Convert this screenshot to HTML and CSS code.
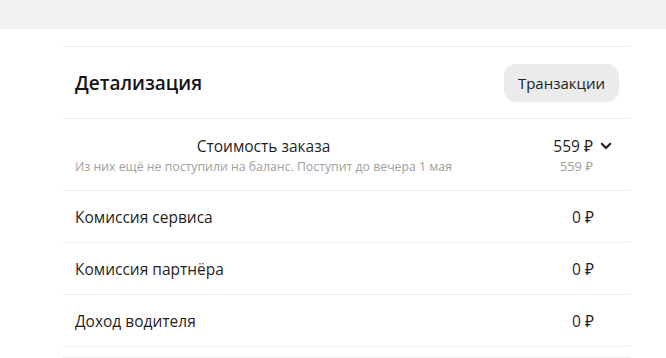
FILE: index.html
```html
<!DOCTYPE html>
<html lang="ru">
<head>
  <meta charset="UTF-8">
  <title>Детализация</title>
  <link rel="stylesheet" href="styles.css">
</head>
<body>
  <div class="topbar"></div>

  <div class="details">
    <div class="head">
      <h2>Детализация</h2>
      <button class="tx-button">Транзакции</button>
    </div>

    <div class="row row-main">
      <div class="label">
        <div class="title">Стоимость заказа</div>
        <div class="sub">Из них ещё не поступили на баланс. Поступит до вечера 1 мая</div>
      </div>
      <div class="value value-main">
        <div class="amount">
          <div>559 ₽</div>
          <div class="sub">559 ₽</div>
        </div>
        <svg class="chevron" width="12" height="8" viewBox="0 0 12 8">
          <path d="M1.8 1.8 L6 6 L10.2 1.8" fill="none" stroke="#222" stroke-width="2.2" stroke-linecap="round" stroke-linejoin="round"/>
        </svg>
      </div>
    </div>

    <div class="row">
      <div class="label">Комиссия сервиса</div>
      <div class="value">0 ₽</div>
    </div>
    <div class="row">
      <div class="label">Комиссия партнёра</div>
      <div class="value">0 ₽</div>
    </div>
    <div class="row">
      <div class="label">Доход водителя</div>
      <div class="value">0 ₽</div>
    </div>
  </div>

  <div class="next-section"></div>
</body>
</html>
```

FILE: styles.css
```css
body {
  margin: 0;
  font-family: 'Open Sans', 'Noto Sans', sans-serif;
  color: #1f1f1f;
  background-color: white;
}
.topbar {
  height: 29px;
  background-color: #f3f2f0;
}
.details, .next-section {
  margin-left: 63px;
  width: 568px;
  border-top: 1px solid #eeeeee;
}
.details {
  margin-top: 17px;
}
.next-section {
  margin-top: 10px;
  height: 4px;
}
.head {
  display: flex;
  justify-content: space-between;
  align-items: center;
  height: 71px;
  padding: 0 12px;
  border-bottom: 1px solid #eeeeee;
}
h2 {
  margin: 0;
  font-size: 19px;
  font-weight: 600;
  color: #151515;
}
.tx-button {
  font-family: inherit;
  font-size: 15px;
  color: #222;
  background-color: #ebebeb;
  border: none;
  border-radius: 12px;
  height: 38px;
  padding: 0 14px;
}
.row {
  display: flex;
  justify-content: space-between;
  align-items: center;
  height: 51px;
  padding: 0 37px 0 12px;
  border-bottom: 1px solid #eeeeee;
  font-size: 15.5px;
}
.row-main {
  height: 71px;
  padding-right: 19px;
}
.row-main .label {
  text-align: center;
}
.sub {
  font-size: 12.3px;
  color: #a0a0a0;
  margin-top: 1px;
}
.value-main {
  display: flex;
  align-items: flex-start;
  gap: 7px;
}
.amount {
  text-align: right;
}
.amount .sub {
  font-size: 13px;
  margin-top: 0;
}
.chevron {
  margin-top: 7px;
}
```
